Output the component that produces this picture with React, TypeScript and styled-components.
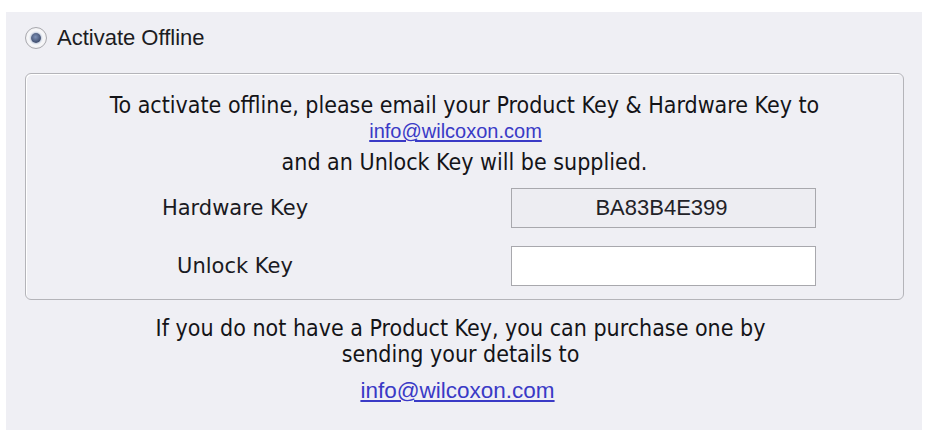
import React from "react";
import styled, { createGlobalStyle } from "styled-components";

const Global = createGlobalStyle`
  html, body { margin: 0; padding: 0; background: #ffffff; }
  body { width: 940px; height: 441px; overflow: hidden; }
`;

const Panel = styled.div`
  box-sizing: border-box;
  margin: 12px 18px 0 6px;
  width: 916px;
  height: 418px;
  background: #efeff4;
  padding: 15px 18px 0 19px;
  display: flex;
  flex-direction: column;
`;

const RadioRow = styled.label`
  display: flex;
  align-items: center;
  gap: 10px;
  height: 22px;
  font-family: "Liberation Sans", Arial, sans-serif;
  font-size: 22px;
  color: #1c1c22;
`;

const RadioOuter = styled.span`
  box-sizing: border-box;
  width: 22px;
  height: 22px;
  border-radius: 50%;
  border: 1.5px solid #a9a9ae;
  background: radial-gradient(circle, #ffffff 40%, #e3e3e8 100%);
  display: flex;
  align-items: center;
  justify-content: center;
`;

const RadioDot = styled.span`
  width: 10px;
  height: 10px;
  border-radius: 50%;
  background: radial-gradient(circle at 45% 40%, #7f93b8 0%, #3f4d6e 70%, #5c6b8c 100%);
  box-shadow: 0 0 2px 1px #b9c4d8;
`;

const GroupBox = styled.div`
  box-sizing: border-box;
  margin-top: 24px;
  height: 227px;
  border: 1.5px solid #b4b4b9;
  border-radius: 6px;
  box-shadow: inset 1px 1px 0 #ffffff;
  display: flex;
  flex-direction: column;
  align-items: center;
  padding-top: 18px;
`;

const Line = styled.div<{ $size?: number }>`
  font-family: "DejaVu Sans Condensed", "DejaVu Sans", sans-serif;
  font-size: ${(p) => p.$size ?? 23}px;
  color: #141418;
  line-height: 26px;
  text-align: center;
  white-space: nowrap;
`;

const Link = styled.a<{ $size?: number; $shift?: number }>`
  font-family: "Liberation Sans", Arial, sans-serif;
  font-size: ${(p) => p.$size ?? 20}px;
  color: #3a3ac6;
  text-decoration: underline;
  text-underline-offset: 2px;
  line-height: 26px;
  margin-right: ${(p) => p.$shift ?? 0}px;
`;

const Form = styled.div`
  align-self: stretch;
  display: grid;
  grid-template-columns: 418px 305px;
  column-gap: 67px;
  row-gap: 18px;
  margin-top: 13px;
`;

const FieldLabel = styled.div`
  font-family: "DejaVu Sans", sans-serif;
  font-size: 21px;
  color: #1a1a22;
  display: flex;
  align-items: center;
  justify-content: center;
  height: 40px;
`;

const Field = styled.div<{ $readOnly?: boolean }>`
  box-sizing: border-box;
  height: 40px;
  border: 1.5px solid #a8a8ad;
  background: ${(p) => (p.$readOnly ? "#ededf2" : "#ffffff")};
  display: flex;
  align-items: center;
  justify-content: center;
  padding-right: 4px;
  font-family: "Liberation Sans", Arial, sans-serif;
  font-size: 22px;
  color: #222228;
`;

const Footer = styled.div`
  display: flex;
  flex-direction: column;
  align-items: center;
  padding-top: 15px;
  padding-right: 8px;
`;

export default function App() {
  return (
    <>
      <Global />
      <Panel>
        <RadioRow>
          <RadioOuter>
            <RadioDot />
          </RadioOuter>
          Activate Offline
        </RadioRow>
        <GroupBox>
          <Line>To activate offline, please email your Product Key &amp; Hardware Key to</Line>
          <Link href="#" $shift={18}>info@wilcoxon.com</Link>
          <Line style={{ marginTop: 5 }}>and an Unlock Key will be supplied.</Line>
          <Form>
            <FieldLabel>Hardware Key</FieldLabel>
            <Field $readOnly>BA83B4E399</Field>
            <FieldLabel>Unlock Key</FieldLabel>
            <Field />
          </Form>
        </GroupBox>
        <Footer>
          <Line>If you do not have a Product Key, you can purchase one by</Line>
          <Line>sending your details to</Line>
          <Link href="#" $size={22.5} $shift={6} style={{ marginTop: 11 }}>info@wilcoxon.com</Link>
        </Footer>
      </Panel>
    </>
  );
}
